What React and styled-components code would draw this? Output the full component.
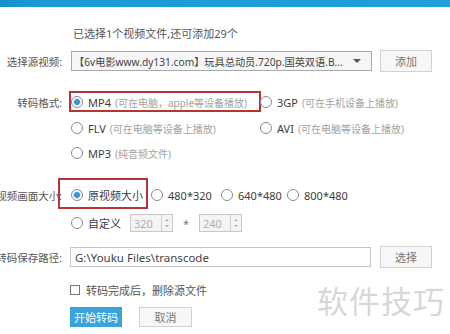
import styled, { createGlobalStyle } from "styled-components";

const Global = createGlobalStyle`
  html, body { margin: 0; padding: 0; background: #fff; }
  body {
    width: 450px;
    height: 334px;
    overflow: hidden;
    font-family: "Noto Sans", "Noto Sans CJK SC", sans-serif;
    font-size: 11px;
    color: #555;
  }
`;

const Page = styled.div`
  position: relative;
  width: 450px;
  height: 334px;
  overflow: hidden;
`;

const TopBar = styled.div`
  height: 7px;
  background: linear-gradient(90deg, #1690cc 0, #1b9ad8 40px, #1f9fdb 100%);
`;

const Row = styled.div`
  display: flex;
  align-items: center;
  height: ${(p) => p.$h || 22}px;
  margin-top: ${(p) => p.$mt || 0}px;
`;

const Label = styled.div`
  width: 62px;
  flex: none;
  display: flex;
  justify-content: flex-end;
  white-space: nowrap;
  color: #555;
  font-size: 10.5px;
  margin-right: 8px;
`;

const Content = styled.div`
  display: flex;
  align-items: center;
  gap: ${(p) => p.$gap || 0}px;
`;

const Notice = styled.span`
  color: #555;
  padding-left: 3px;
`;

const Select = styled.div`
  width: 301px;
  height: 20px;
  box-sizing: border-box;
  border: 1px solid #a9a9a9;
  background: #f6f6f6;
  display: flex;
  align-items: center;
  padding: 0 10px 0 2px;
  color: #444;
  white-space: nowrap;
  margin-left: 1px;
`;

const SelectText = styled.span`
  flex: 1;
  overflow: hidden;
  font-size: 10.2px;
`;

const Caret = styled.span`
  flex: none;
  width: 0;
  height: 0;
  margin-left: 6px;
  border-left: 4px solid transparent;
  border-right: 4px solid transparent;
  border-top: 4px solid #555;
`;

const Input = styled.div`
  width: 301px;
  height: 20px;
  box-sizing: border-box;
  border: 1px solid #c4c4c4;
  background: #fff;
  display: flex;
  align-items: center;
  padding-left: 4px;
  color: #444;
  font-size: 11.5px;
`;

const Button = styled.div`
  width: ${(p) => p.$w || 52}px;
  height: ${(p) => p.$h || 22}px;
  box-sizing: border-box;
  display: flex;
  align-items: center;
  justify-content: center;
  font-size: 11px;
  border: 1px solid ${(p) => (p.$primary ? "#3ba3dc" : "#d2d2d2")};
  background: ${(p) => (p.$primary ? "#3ba3dc" : "#f7f7f7")};
  color: ${(p) => (p.$primary ? "#fff" : "#777")};
`;

const Options = styled.div`
  display: grid;
  grid-template-columns: ${(p) => p.$cols};
  align-items: center;
  padding-left: 1px;
  height: 100%;
`;

const Option = styled.div`
  position: relative;
  display: flex;
  align-items: center;
  height: 100%;
  white-space: nowrap;
  &::after {
    content: "";
    display: ${(p) => (p.$mark ? "block" : "none")};
    position: absolute;
    inset: ${(p) => p.$mark || "0"};
    border: 2px solid #b33634;
    pointer-events: none;
  }
`;

const Radio = styled.span`
  width: 12px;
  height: 12px;
  box-sizing: border-box;
  border-radius: 50%;
  border: 1px solid #8a8a8a;
  background: ${(p) =>
    p.$on
      ? "radial-gradient(circle, #3b97d3 0 2.6px, #bfe0f3 3.2px, #fff 4.2px)"
      : "#fff"};
  flex: none;
  margin-right: 5px;
`;

const Name = styled.span`
  color: #3d3d3d;
  font-size: 11px;
  margin-right: 4px;
`;

const Hint = styled.span`
  color: #a2a2a2;
  font-size: 10px;
`;

const Spin = styled.div`
  width: 43px;
  height: 18px;
  box-sizing: border-box;
  border: 1px solid #c8c8c8;
  background: #f4f4f4;
  display: flex;
  align-items: center;
  color: #b0b0b0;
  font-size: 11px;
`;

const SpinValue = styled.span`
  flex: 1;
  padding-left: 3px;
`;

const SpinArrows = styled.div`
  width: 11px;
  height: 100%;
  border-left: 1px solid #d0d0d0;
  display: flex;
  flex-direction: column;
  align-items: center;
  justify-content: space-around;
  padding: 2px 0;
  box-sizing: border-box;
`;

const Tri = styled.span`
  width: 0;
  height: 0;
  border-left: 2px solid transparent;
  border-right: 2px solid transparent;
  ${(p) =>
    p.$up ? "border-bottom: 2px solid #aaa;" : "border-top: 2px solid #aaa;"}
`;

const Star = styled.span`
  color: #777;
  width: 26px;
  text-align: center;
`;

const Check = styled.span`
  width: 10px;
  height: 10px;
  border: 1px solid #777;
  box-sizing: border-box;
  background: #fff;
  margin-right: 6px;
`;

const CheckText = styled.span`
  color: #555;
`;

const Watermark = styled.div`
  position: absolute;
  right: 5px;
  top: 277px;
  font-family: "Noto Sans CJK SC", sans-serif;
  font-size: 31px;
  letter-spacing: 1px;
  color: rgba(150, 150, 150, 0.4);
  white-space: nowrap;
`;

const Spinner = ({ value }) => (
  <Spin>
    <SpinValue>{value}</SpinValue>
    <SpinArrows>
      <Tri $up />
      <Tri />
    </SpinArrows>
  </Spin>
);

const App = () => {
  return (
    <Page>
      <Global />
      <TopBar />
      <Row $mt={18} $h={16}>
        <Label />
        <Content>
          <Notice>已选择1个视频文件,还可添加29个</Notice>
        </Content>
      </Row>
      <Row $mt={9} $h={22}>
        <Label>选择源视频:</Label>
        <Content $gap={8}>
          <Select>
            <SelectText>【6v电影www.dy131.com】玩具总动员.720p.国英双语.B...</SelectText>
            <Caret />
          </Select>
          <Button>添加</Button>
        </Content>
      </Row>

      <Row $mt={17} $h={26}>
        <Label>转码格式:</Label>
        <Options $cols="189px auto">
          <Option $mark="2px -1px 3px -2px">
            <Radio $on />
            <Name>MP4</Name>
            <Hint>(可在电脑，apple等设备播放)</Hint>
          </Option>
          <Option>
            <Radio />
            <Name>3GP</Name>
            <Hint>(可在手机设备上播放)</Hint>
          </Option>
        </Options>
      </Row>
      <Row $h={26}>
        <Label />
        <Options $cols="189px auto">
          <Option>
            <Radio />
            <Name>FLV</Name>
            <Hint>(可在电脑等设备上播放)</Hint>
          </Option>
          <Option>
            <Radio />
            <Name>AVI</Name>
            <Hint>(可在电脑等设备上播放)</Hint>
          </Option>
        </Options>
      </Row>
      <Row $h={24}>
        <Label />
        <Options $cols="auto">
          <Option>
            <Radio />
            <Name>MP3</Name>
            <Hint>(纯音频文件)</Hint>
          </Option>
        </Options>
      </Row>

      <Row $mt={17} $h={26}>
        <Label>视频画面大小:</Label>
        <Options $cols="80px 70px 66px auto">
          <Option $mark="-4px 3px -1px -13px">
            <Radio $on />
            <Name>原视频大小</Name>
          </Option>
          <Option>
            <Radio />
            <Name>480*320</Name>
          </Option>
          <Option>
            <Radio />
            <Name>640*480</Name>
          </Option>
          <Option>
            <Radio />
            <Name>800*480</Name>
          </Option>
        </Options>
      </Row>
      <Row $h={30}>
        <Label />
        <Options $cols="59px auto auto auto">
          <Option>
            <Radio />
            <Name>自定义</Name>
          </Option>
          <Spinner value="320" />
          <Star>*</Star>
          <Spinner value="240" />
        </Options>
      </Row>

      <Row $mt={8} $h={22}>
        <Label>转码保存路径:</Label>
        <Content $gap={9}>
          <Input>G:\Youku Files\transcode</Input>
          <Button>选择</Button>
        </Content>
      </Row>
      <Row $mt={12} $h={20}>
        <Label />
        <Content>
          <Check />
          <CheckText>转码完成后，删除源文件</CheckText>
        </Content>
      </Row>
      <Row $mt={7} $h={20}>
        <Label />
        <Content $gap={17}>
          <Button $primary $h={20}>开始转码</Button>
          <Button $w={53} $h={20}>取消</Button>
        </Content>
      </Row>
      <Watermark>软件技巧</Watermark>
    </Page>
  );
};

export default App;
